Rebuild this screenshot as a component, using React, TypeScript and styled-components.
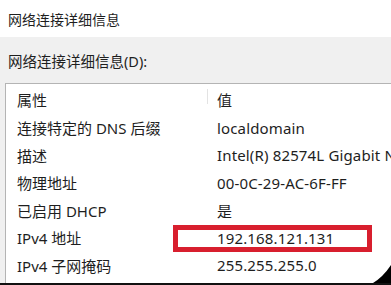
import styled, { createGlobalStyle } from "styled-components";

const GlobalStyle = createGlobalStyle`
  html, body {
    margin: 0;
    padding: 0;
    background: #ffffff;
  }
`

const Window = styled.div`
  position: relative;
  width: 391px;
  height: 285px;
  overflow: hidden;
  box-sizing: border-box;
  display: flex;
  flex-direction: column;
  background: #f0f0f0;
  border-bottom: 2px solid #111111;
  font-family: "Noto Sans", "Noto Sans CJK SC", sans-serif;
  color: #1e1e1e;
`

const TitleBar = styled.div`
  height: 37px;
  flex: none;
  display: flex;
  align-items: center;
  padding: 0 0 0 8px;
  background: #ffffff;
  font-size: 14px;
`

const Body = styled.div`
  flex: 1;
  display: flex;
  flex-direction: column;
  padding-left: 5px;
  min-height: 0;
`

const FieldLabel = styled.div`
  height: 46px;
  flex: none;
  display: flex;
  align-items: center;
  padding: 1px 0 0 3px;
  box-sizing: border-box;
  font-size: 14.5px;
`

const ListBox = styled.div`
  flex: 1;
  width: calc(100% + 20px);
  background: #ffffff;
  border-top: 1px solid #b4b4b4;
  border-left: 1px solid #b4b4b4;
  display: flex;
  flex-direction: column;
  overflow: hidden;
`

const Row = styled.div<{ $header?: boolean }>`
  height: ${(p) => (p.$header ? "30px" : "27.5px")};
  flex: none;
  display: grid;
  grid-template-columns: 201px 1fr;
  align-items: center;
  font-size: 15px;
  white-space: nowrap;
`

const Cell = styled.div<{ $value?: boolean; $divider?: boolean }>`
  position: relative;
  padding-left: ${(p) => (p.$value ? "10px" : "11px")};
  letter-spacing: ${(p) => (p.$value ? "0.15px" : "0")};
  overflow: hidden;
  ${(p) =>
    p.$divider &&
    `
    &::before {
      content: "";
      position: absolute;
      left: 0;
      top: -11px;
      height: 26px;
      width: 1px;
      background: #e3e3e3;
    }
  `}
`

const Highlight = styled.div`
  position: absolute;
  left: 173px;
  top: 225px;
  width: 199px;
  height: 27px;
  box-sizing: border-box;
  border: 5px solid #d81f2e;
`

const Corner = styled.svg`
  position: absolute;
  right: 0;
  bottom: 0;
  width: 18px;
  height: 18px;
`

const rows = [
  ["连接特定的 DNS 后缀", "localdomain"],
  ["描述", "Intel(R) 82574L Gigabit Network Connection"],
  ["物理地址", "00-0C-29-AC-6F-FF"],
  ["已启用 DHCP", "是"],
  ["IPv4 地址", "192.168.121.131"],
  ["IPv4 子网掩码", "255.255.255.0"],
]

const App = () => {
  return (
    <>
      <GlobalStyle />
      <Window>
        <TitleBar>网络连接详细信息</TitleBar>
        <Body>
          <FieldLabel>网络连接详细信息(D):</FieldLabel>
          <ListBox>
            <Row $header>
              <Cell>属性</Cell>
              <Cell $value $divider>值</Cell>
            </Row>
            {rows.map(([name, value]) => (
              <Row key={name}>
                <Cell>{name}</Cell>
                <Cell $value>{value}</Cell>
              </Row>
            ))}
          </ListBox>
        </Body>
        <Highlight />
        <Corner viewBox="0 0 18 18">
          <path d="M18 0 L18 18 L0 18 Q10 12 18 0 Z" fill="#000" />
        </Corner>
      </Window>
    </>
  )
}

export default App;
